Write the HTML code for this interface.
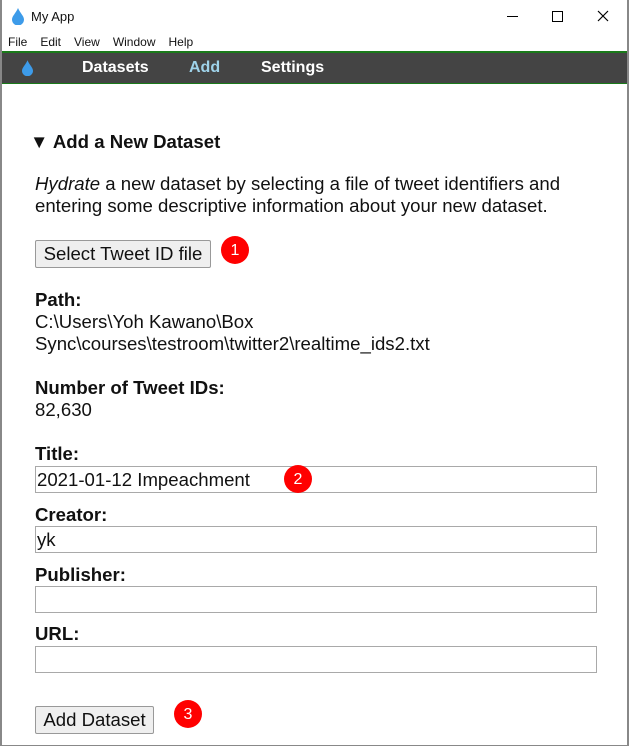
<!DOCTYPE html>
<html><head><style>
body{margin:0;width:629px;height:746px;background:#fff;position:relative;overflow:hidden;font-family:"Liberation Sans",Arial,sans-serif;color:#111}
.a{position:absolute;white-space:nowrap}
.t{font-size:18.6px;line-height:20px}
.b{font-weight:bold}
.inp{position:absolute;left:35px;width:562px;height:27px;border:1px solid #a9a9a9;box-sizing:border-box;font-size:18.6px;line-height:25px;padding-left:1px}
.btn{position:absolute;border:1px solid #999;background:#efefef;box-sizing:border-box;font-size:18.6px;line-height:25px;text-align:center;border-radius:2px}
.badge{position:absolute;width:28px;height:28px;border-radius:50%;background:#f00;color:#fff;font-size:16px;line-height:30px;text-align:center}
</style></head><body>
<div class="a" style="left:0;top:0;width:2px;height:746px;background:#888"></div>
<div class="a" style="right:0;top:0;width:2px;height:746px;background:#888"></div>
<div class="a" style="left:0;bottom:0;width:629px;height:1px;background:#888"></div>
<svg class="a" style="left:12px;top:8px" width="12" height="17" viewBox="0 0 12 17"><path d="M6 0C4 5 0 8 0 11.5A6 6 0 0 0 12 11.5C12 8 8 5 6 0Z" fill="#3d9be9"/></svg>
<div class="a" style="left:31px;top:9px;font-size:13px">My App</div>
<div class="a" style="left:507px;top:16px;width:11px;height:1px;background:#000"></div>
<div class="a" style="left:552px;top:11px;width:9px;height:9px;border:1px solid #000"></div>
<svg class="a" style="left:597px;top:10px" width="12" height="12"><path d="M1 1L11 11M11 1L1 11" stroke="#000" stroke-width="1.2"/></svg>
<div class="a" style="left:8px;top:35px;font-size:12px;word-spacing:1px">File&nbsp;&nbsp; Edit&nbsp;&nbsp; View&nbsp;&nbsp; Window&nbsp;&nbsp; Help</div>
<div class="a" style="left:2px;top:51px;width:625px;height:33px;background:#444;border-top:2px solid #1a7a1a;border-bottom:1px solid #1a7a1a;box-sizing:border-box"></div>
<svg class="a" style="left:22px;top:60px" width="11" height="16" viewBox="0 0 12 17"><path d="M6 0C4 5 0 8 0 11.5A6 6 0 0 0 12 11.5C12 8 8 5 6 0Z" fill="#3d9be9"/></svg>
<div class="a b" style="left:82px;top:59px;font-size:16px;color:#fff">Datasets</div>
<div class="a b" style="left:189px;top:59px;font-size:16px;color:#9fd3ea">Add</div>
<div class="a b" style="left:261px;top:59px;font-size:16px;color:#fff">Settings</div>
<div class="a t b" style="left:30px;top:132px">▼ Add a New Dataset</div>
<div class="a t" style="left:35px;top:173px;line-height:22px"><i>Hydrate</i> a new dataset by selecting a file of tweet identifiers and<br>entering some descriptive information about your new dataset.</div>
<div class="btn" style="left:35px;top:240px;width:176px;height:28px">Select Tweet ID file</div>
<div class="badge" style="left:221px;top:236px">1</div>
<div class="a t b" style="left:35px;top:290px">Path:</div>
<div class="a t" style="left:35px;top:311px;line-height:22px">C:\Users\Yoh Kawano\Box<br>Sync\courses\testroom\twitter2\realtime_ids2.txt</div>
<div class="a t b" style="left:35px;top:378px">Number of Tweet IDs:</div>
<div class="a t" style="left:35px;top:400px">82,630</div>
<div class="a t b" style="left:35px;top:444px">Title:</div>
<div class="inp" style="top:466px">2021-01-12 Impeachment</div>
<div class="badge" style="left:284px;top:465px">2</div>
<div class="a t b" style="left:35px;top:505px">Creator:</div>
<div class="inp" style="top:526px">yk</div>
<div class="a t b" style="left:35px;top:565px">Publisher:</div>
<div class="inp" style="top:586px"></div>
<div class="a t b" style="left:35px;top:624px">URL:</div>
<div class="inp" style="top:646px"></div>
<div class="btn" style="left:35px;top:706px;width:119px;height:28px">Add Dataset</div>
<div class="badge" style="left:174px;top:700px">3</div>
</body></html>
